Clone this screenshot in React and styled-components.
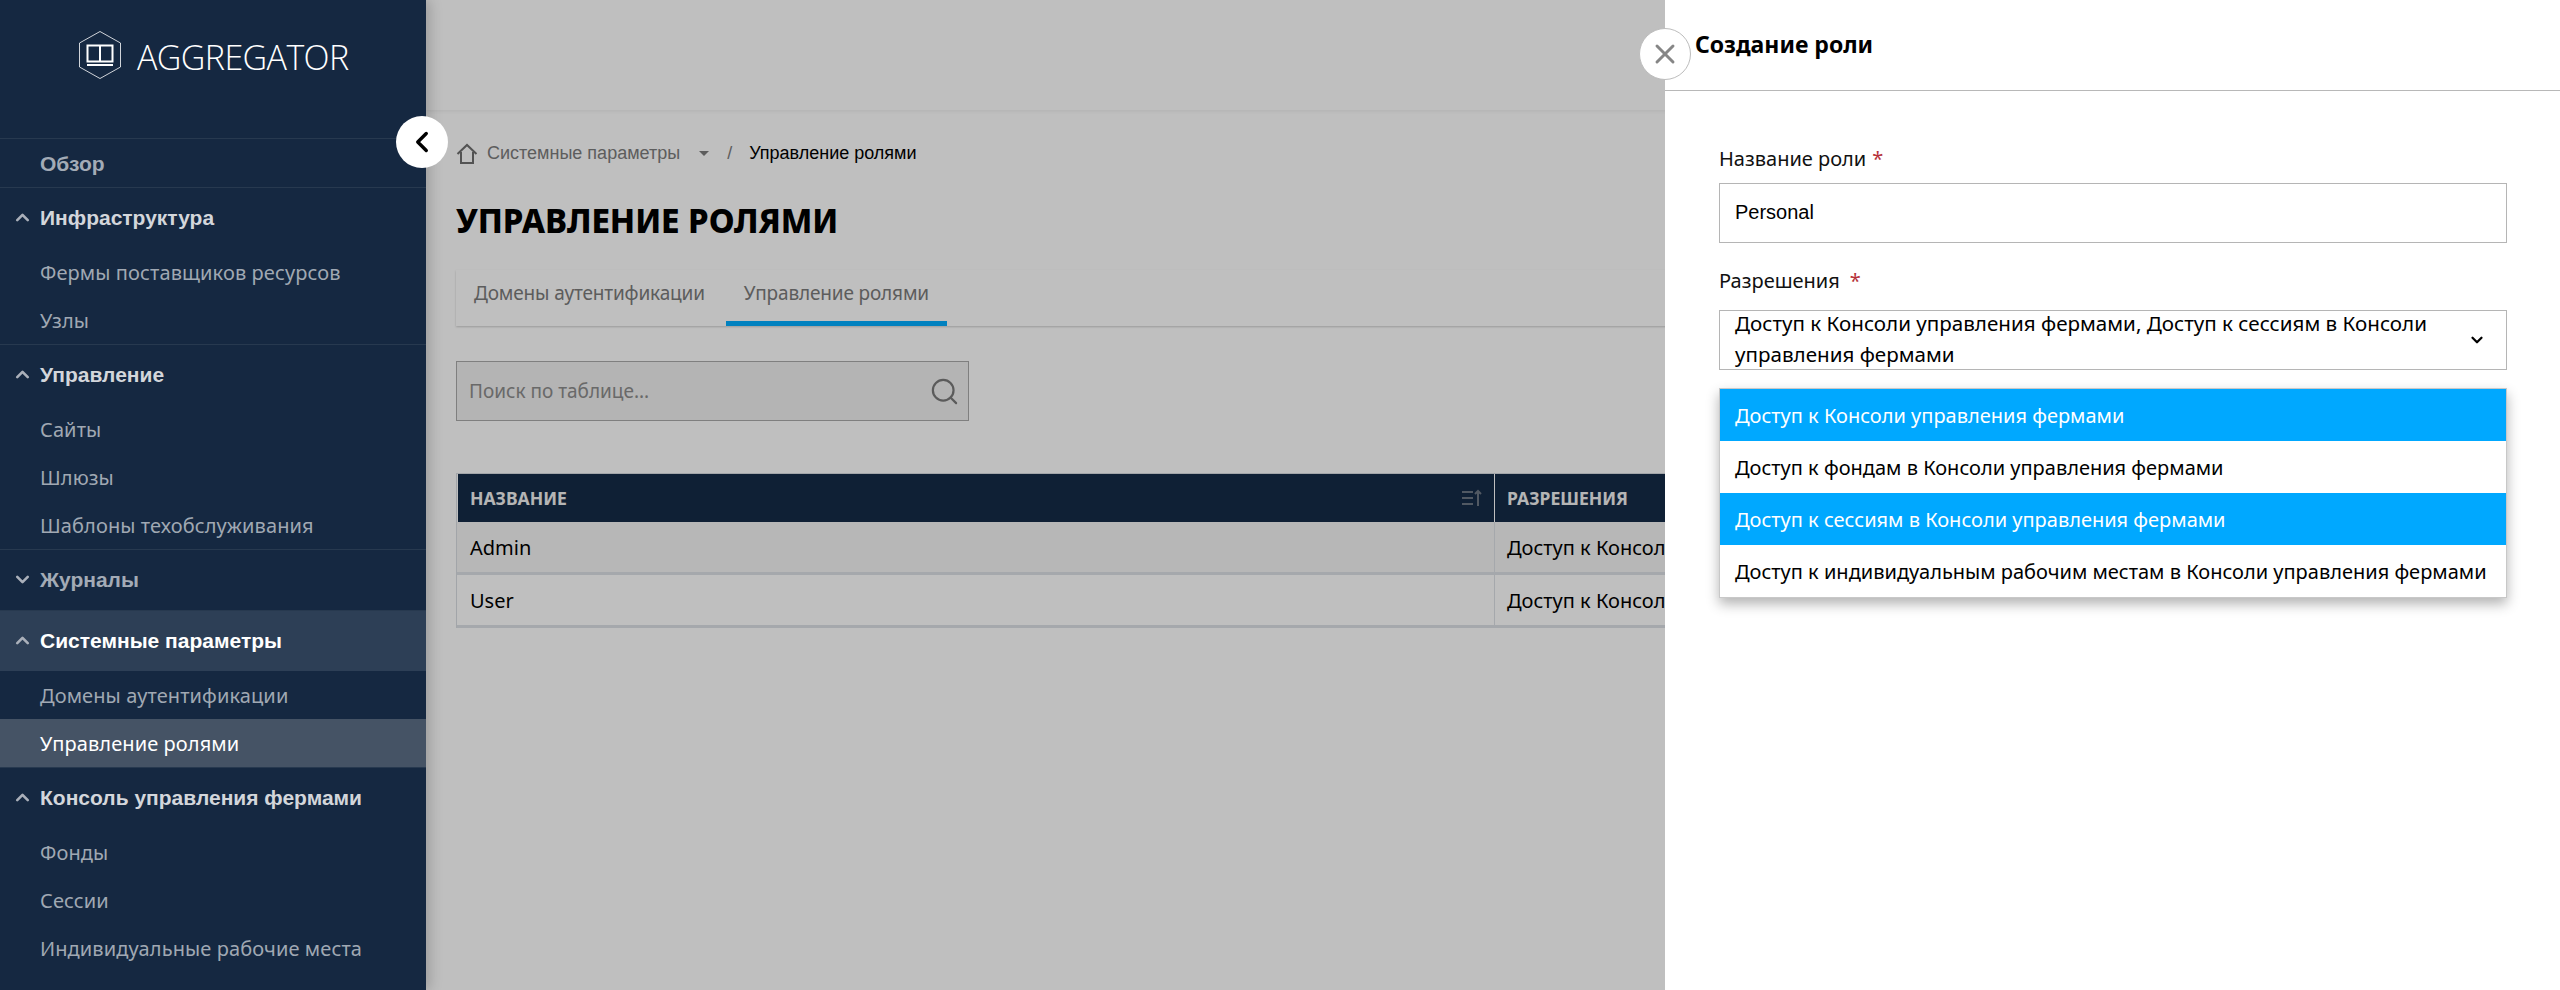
import styled, { createGlobalStyle } from "styled-components";
import { FiChevronLeft, FiChevronDown, FiChevronUp, FiX, FiSearch } from "react-icons/fi";

const Global = createGlobalStyle`
  html, body { margin: 0; padding: 0; height: 100%; overflow: hidden; background: #fff; }
  * { box-sizing: border-box; }
  body { font-family: "Noto Sans", sans-serif; }
`;

const Page = styled.div`
  position: relative;
  display: flex;
  width: 2560px;
  height: 990px;
  overflow: hidden;
`;

const Sidebar = styled.aside`
  width: 426px;
  flex: none;
  background: #152841;
  z-index: 3;
  box-shadow: 4px 0 12px rgba(0, 0, 0, 0.18);
`;

const Logo = styled.div`
  height: 138px;
  padding: 31px 0 0 79px;
  display: flex;
  align-items: flex-start;
  gap: 16px;
  color: #fff;
`;

const LogoText = styled.span`
  margin-top: 1px;
  font-family: "Open Sans", sans-serif;
  font-weight: 300;
  font-size: 34px;
  line-height: 50px;
  letter-spacing: -0.6px;
`;

const Group = styled.div`
  border-top: 1px solid #27394f;
`;

const GroupHead = styled.div`
  position: relative;
  height: ${(p) => p.$h || 60}px;
  padding-left: 40px;
  padding-top: ${(p) => (p.$h ? 2 : 0)}px;
  display: flex;
  align-items: center;
  font-family: "Liberation Sans", sans-serif;
  font-weight: 700;
  font-size: 21px;
  color: ${(p) => (p.$active ? "#fff" : p.$dim ? "#a3abb6" : "#d3d6db")};
  background: ${(p) => (p.$active ? "#2d3f56" : "transparent")};
  svg {
    position: absolute;
    left: 12px;
    top: 50%;
    margin-top: -11px;
    color: #aab0ba;
  }
`;

const NavItem = styled.div`
  height: 48px;
  padding-left: 40px;
  display: flex;
  align-items: center;
  font-family: "Noto Sans", sans-serif;
  font-size: 20px;
  letter-spacing: 0.1px;
  color: ${(p) => (p.$active ? "#fff" : "#a0a8b3")};
  background: ${(p) => (p.$active ? "#455365" : "transparent")};
`;

const CollapseBtn = styled.button`
  position: absolute;
  left: 396px;
  top: 116px;
  width: 52px;
  height: 52px;
  border: 0;
  padding: 0;
  border-radius: 50%;
  background: #fff;
  color: #000;
  display: flex;
  align-items: center;
  justify-content: center;
  z-index: 4;
`;

const Main = styled.main`
  flex: 1;
  min-width: 0;
  background: #fff;
`;

const TopBar = styled.div`
  height: 110px;
  box-shadow: 0 1px 4px rgba(0, 0, 0, 0.08);
`;

const Content = styled.div`
  padding: 0 0 0 30px;
`;

const Crumbs = styled.div`
  height: 86px;
  padding-top: 1px;
  display: flex;
  align-items: center;
  font-family: "Liberation Sans", sans-serif;
  font-size: 18px;
  color: #7d7d7d;
`;

const CrumbCurrent = styled.span`
  color: #000;
  margin-left: 17px;
`;

const Caret = styled.span`
  width: 0;
  height: 0;
  margin: 0 18px 0 19px;
  border-left: 5px solid transparent;
  border-right: 5px solid transparent;
  border-top: 5px solid #7d7d7d;
`;

const Title = styled.h1`
  margin: 0;
  height: 74px;
  padding-bottom: 26px;
  display: flex;
  align-items: center;
  font-family: "Noto Sans", sans-serif;
  font-size: 33px;
  font-weight: 800;
  letter-spacing: -0.1px;
  color: #000;
`;

const Tabs = styled.div`
  display: flex;
  gap: 3px;
  height: 56px;
  box-shadow: 0 1px 2px rgba(0, 0, 0, 0.2);
`;

const Tab = styled.div`
  padding: 0 18px 5px;
  display: flex;
  align-items: center;
  font-size: 19px;
  letter-spacing: -0.15px;
  color: #7b7b7b;
  border-bottom: 5px solid ${(p) => (p.$active ? "#02acff" : "transparent")};
`;

const Search = styled.div`
  margin-top: 35px;
  width: 513px;
  height: 60px;
  padding: 0 8px 0 12px;
  display: flex;
  align-items: center;
  justify-content: space-between;
  border: 1px solid #aaa;
  background: #f0f0f0;
  font-size: 19px;
  color: #8c8c8c;
  svg { color: #7a7a7a; }
`;

const Table = styled.div`
  margin-top: 52px;
  border-left: 1px solid #d9dde2;
  border-top: 1px solid #d9dde2;
`;

const TableHead = styled.div`
  display: flex;
  height: 48px;
  margin-left: 1px;
  background: #152b47;
  color: #f2f2f2;
  font-size: 17.5px;
  font-weight: 700;
`;

const Row = styled.div`
  display: flex;
  height: 53px;
  font-size: 20px;
  color: #000;
  border-bottom: 3px solid #dde1e6;
  background: ${(p) => (p.$shade ? "#f5f5f5" : "#fff")};
`;

const CellName = styled.div`
  position: relative;
  width: ${(p) => (p.$head ? 1037 : 1038)}px;
  padding-left: ${(p) => (p.$head ? 12 : 13)}px;
  display: flex;
  align-items: center;
  border-right: 1px solid ${(p) => (p.$head ? "#fff" : "#dde1e6")};
`;

const CellPerm = styled.div`
  flex: 1;
  padding-left: 12px;
  display: flex;
  align-items: center;
  white-space: nowrap;
`;

const SortIcon = styled.svg`
  position: absolute;
  right: 12px;
  top: 15px;
`;

const Overlay = styled.div`
  position: absolute;
  inset: 0 0 0 426px;
  background: rgba(0, 0, 0, 0.25);
  z-index: 1;
`;

const Drawer = styled.section`
  position: absolute;
  left: 1665px;
  top: 0;
  bottom: 0;
  right: 0;
  background: #fff;
  z-index: 2;
`;

const DrawerHead = styled.div`
  height: 91px;
  padding: 26px 0 0 30px;
  border-bottom: 1px solid #b8b8b8;
  font-size: 23px;
  line-height: 36px;
  font-weight: 700;
  color: #000;
`;

const CloseBtn = styled.button`
  position: absolute;
  left: -26px;
  top: 28px;
  width: 52px;
  height: 52px;
  padding: 0;
  border-radius: 50%;
  border: 1px solid #bdbdbd;
  background: #fff;
  color: #868686;
  display: flex;
  align-items: center;
  justify-content: center;
`;

const Form = styled.div`
  padding: 50px 53px 0 54px;
`;

const Label = styled.div`
  height: ${(p) => p.$h || 42}px;
  font-size: 20px;
  line-height: 36px;
  color: #111;
  span {
    color: #b6323a;
    margin-left: ${(p) => p.$gap || 6}px;
  }
`;

const Input = styled.div`
  height: 60px;
  padding: 0 15px 2px;
  display: flex;
  align-items: center;
  border: 1px solid #b5b5b5;
  font-family: "Liberation Sans", sans-serif;
  font-size: 20px;
  color: #000;
  margin-bottom: 20px;
`;

const Select = styled.div`
  height: 60px;
  padding: 0 50px 0 15px;
  position: relative;
  border: 1px solid #b5b5b5;
  color: #000;
  svg {
    position: absolute;
    right: 20px;
    top: 20px;
  }
`;

const SelectText = styled.div`
  margin-top: -3px;
  font-size: 20.6px;
  line-height: 31px;
`;

const Options = styled.div`
  margin-top: 18px;
  border: 1px solid #c8c8c8;
  box-shadow: 0 6px 12px rgba(0, 0, 0, 0.3);
`;

const Option = styled.div`
  height: 52px;
  padding-left: 15px;
  display: flex;
  align-items: center;
  font-size: 20px;
  white-space: nowrap;
  color: ${(p) => (p.$selected ? "#fff" : "#000")};
  background: ${(p) => (p.$selected ? "#00a8ff" : "#fff")};
`;

const HomeIcon = () => (
  <svg width="22" height="22" viewBox="0 0 22 22" fill="none" stroke="#6f6f6f" strokeWidth="2" style={{ marginRight: 9 }}>
    <path d="M1.500 11 11 2l9.500 9M5 9v11h12V9" />
  </svg>
);

const LogoIcon = () => (
  <svg width="42" height="48" viewBox="0 0 42 48" fill="none" stroke="#fff">
    <path d="M21 .5 41.500 12v24L21 47.500.5 36V12z" strokeWidth="1" opacity="0.8" />
    <rect x="8.500" y="14.500" width="25" height="16" strokeWidth="2" />
    <path d="M21 15v16M8 34h26" strokeWidth="2" />
  </svg>
);

const nav = [
  { items: [], title: "Обзор", h: 48, dim: true, plain: true },
  { title: "Инфраструктура", items: ["Фермы поставщиков ресурсов", "Узлы"] },
  { title: "Управление", items: ["Сайты", "Шлюзы", "Шаблоны техобслуживания"] },
  { title: "Журналы", items: [], closed: true, dim: true },
  { title: "Системные параметры", active: true, items: ["Домены аутентификации", "Управление ролями"] },
  { title: "Консоль управления фермами", items: ["Фонды", "Сессии", "Индивидуальные рабочие места"] },
];

const options = [
  ["Доступ к Консоли управления фермами", true],
  ["Доступ к фондам в Консоли управления фермами", false],
  ["Доступ к сессиям в Консоли управления фермами", true],
  ["Доступ к индивидуальным рабочим местам в Консоли управления фермами", false],
];

const App = () => {
  return (
    <Page>
      <Global />
      <Sidebar>
        <Logo>
          <LogoIcon />
          <LogoText>AGGREGATOR</LogoText>
        </Logo>
        {nav.map((g) => (
          <Group key={g.title}>
            <GroupHead $h={g.h} $active={g.active} $dim={g.dim}>
              {!g.plain && (g.closed ? <FiChevronDown size={21} strokeWidth={3} /> : <FiChevronUp size={21} strokeWidth={3} />)}
              {g.title}
            </GroupHead>
            {g.items.map((i) => (
              <NavItem key={i} $active={i === "Управление ролями"}>{i}</NavItem>
            ))}
          </Group>
        ))}
      </Sidebar>
      <CollapseBtn><FiChevronLeft size={34} strokeWidth={2.4} /></CollapseBtn>
      <Main>
        <TopBar />
        <Content>
          <Crumbs>
            <HomeIcon />
            Системные параметры
            <Caret />
            /
            <CrumbCurrent>Управление ролями</CrumbCurrent>
          </Crumbs>
          <Title>УПРАВЛЕНИЕ РОЛЯМИ</Title>
          <Tabs>
            <Tab>Домены аутентификации</Tab>
            <Tab $active>Управление ролями</Tab>
          </Tabs>
          <Search>
            Поиск по таблице...
            <FiSearch size={31} strokeWidth={1.7} />
          </Search>
          <Table>
            <TableHead>
              <CellName $head>
                НАЗВАНИЕ
                <SortIcon width="20" height="18" viewBox="0 0 20 18" fill="none" stroke="#6d7784" strokeWidth="2">
                  <path d="M0 3h11M0 9h11M0 15h11M16 17V2m-3 3 3-3 3 3" />
                </SortIcon>
              </CellName>
              <CellPerm>РАЗРЕШЕНИЯ</CellPerm>
            </TableHead>
            <Row $shade>
              <CellName>Admin</CellName>
              <CellPerm>Доступ к Консоли управления фермами</CellPerm>
            </Row>
            <Row>
              <CellName>User</CellName>
              <CellPerm>Доступ к Консоли управления фермами</CellPerm>
            </Row>
          </Table>
        </Content>
      </Main>
      <Overlay />
      <Drawer>
        <CloseBtn><FiX size={32} strokeWidth={2.2} /></CloseBtn>
        <DrawerHead>Создание роли</DrawerHead>
        <Form>
          <Label>Название роли<span>*</span></Label>
          <Input>Personal</Input>
          <Label $gap={10} $h={47}>Разрешения<span>*</span></Label>
          <Select>
            <SelectText>Доступ к Консоли управления фермами, Доступ к сессиям в Консоли управления фермами</SelectText>
            <FiChevronDown size={18} strokeWidth={3} />
          </Select>
          <Options>
            {options.map(([text, selected]) => (
              <Option key={text} $selected={selected}>{text}</Option>
            ))}
          </Options>
        </Form>
      </Drawer>
    </Page>
  );
};

export default App;
